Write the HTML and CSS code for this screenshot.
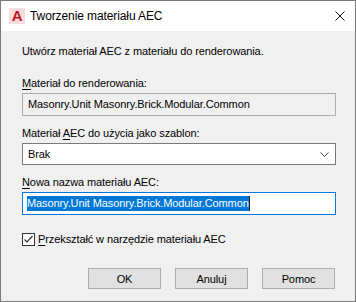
FILE: index.html
```html
<!DOCTYPE html>
<html lang="pl">
<head>
  <meta charset="UTF-8">
  <title>Tworzenie materiału AEC</title>
  <link rel="stylesheet" href="styles.css">
</head>
<body>

<div class="window">
  <!-- pasek tytułu -->
  <div class="titlebar">
    <span class="app-icon">A</span>
    <span class="title">Tworzenie materiału AEC</span>
    <svg class="close" width="10" height="10" viewBox="0 0 10 10">
      <path d="M0.5 0.5 L9.5 9.5 M9.5 0.5 L0.5 9.5" stroke="#111" stroke-width="1" fill="none"/>
    </svg>
  </div>

  <div class="content">
    <p class="intro">Utwórz materiał AEC z materiału do renderowania.</p>

    <div class="label label-first"><u>M</u>ateriał do renderowania:</div>
    <div class="field readonly">Masonry.Unit Masonry.Brick.Modular.Common</div>

    <div class="label"><span>Materiał <u>A</u>EC do użycia jako szablon:</span></div>
    <div class="field combo">
      <span>Brak</span>
      <svg class="chevron" width="9" height="5" viewBox="0 0 9 5">
        <path d="M0.5 0.5 L4.5 4.5 L8.5 0.5" stroke="#444" stroke-width="1" fill="none"/>
      </svg>
    </div>

    <div class="label"><u>N</u>owa nazwa materiału AEC:</div>
    <div class="field edit"><span class="sel">Masonry.Unit Masonry.Brick.Modular.Common</span><span class="caret"></span></div>

    <label class="check-row">
      <span class="checkbox">
        <svg width="11" height="11" viewBox="0 0 11 11">
          <path d="M1.5 5.5 L4 8 L9.5 2" stroke="#333" stroke-width="1.2" fill="none"/>
        </svg>
      </span>
      <span><u>P</u>rzekształć w narzędzie materiału AEC</span>
    </label>

    <div class="buttons">
      <button>OK</button>
      <button>Anuluj</button>
      <button>Pomoc</button>
    </div>
  </div>
</div>

</body>
</html>
```

FILE: styles.css
```css
body {
  margin: 0;
  font-family: "Liberation Sans", Arial, sans-serif;
  font-size: 11px;
  letter-spacing: -0.1px;
  color: #000;
}
.window {
  width: 356px;
  height: 302px;
  box-sizing: border-box;
  border: 1px solid #7a7a7a;
  background: #f0f0f0;
  display: flex;
  flex-direction: column;
}
.titlebar {
  height: 30px;
  background: #fff;
  display: flex;
  align-items: center;
}
.app-icon {
  width: 16px;
  height: 16px;
  margin-left: 8px;
  background: #f7dede;
  color: #c4141c;
  font-weight: bold;
  font-size: 15px;
  line-height: 16px;
  text-align: center;
}
.title {
  margin-left: 5px;
  font-size: 12px;
  flex: 1;
}
.close {
  margin-right: 10px;
}
.content {
  flex: 1;
  padding-left: 21px;
}
.intro {
  margin: 13px 0 0;
  line-height: 15px;
}
.label {
  line-height: 15px;
  margin-top: 10px;
  margin-bottom: 2px;
}
.label-first {
  margin-top: 17px;
}
u {
  text-decoration-thickness: 1px;
  text-underline-offset: 2px;
}
.field {
  width: 314px;
  box-sizing: border-box;
  height: 23px;
  line-height: 21px;
  padding-left: 4px;
  white-space: nowrap;
}
.readonly {
  border: 1px solid #adadad;
  background: #f0f0f0;
  padding-left: 5px;
}
.combo {
  height: 22px;
  line-height: 20px;
  border: 1px solid #7a7a7a;
  background: #fff;
  display: flex;
  align-items: center;
  justify-content: space-between;
  padding-left: 5px;
  padding-right: 6px;
}
.edit {
  border: 1px solid #0078d7;
  background: #fff;
  display: flex;
  align-items: center;
}
.sel {
  background: #0078d7;
  color: #fff;
  line-height: 15px;
}
.caret {
  display: inline-block;
  width: 1px;
  height: 15px;
  background: #222;
}
.check-row {
  display: flex;
  align-items: center;
  gap: 3px;
  margin-top: 17px;
  line-height: 15px;
}
.checkbox {
  width: 13px;
  height: 13px;
  box-sizing: border-box;
  border: 1px solid #333;
  background: #fff;
  display: flex;
  align-items: center;
  justify-content: center;
}
.buttons {
  display: flex;
  gap: 14px;
  margin-top: 21px;
  margin-left: 66px;
}
button {
  width: 73px;
  height: 21px;
  padding: 0;
  font-family: inherit;
  font-size: 11px;
  letter-spacing: -0.1px;
  background: #e1e1e1;
  border: 1px solid #adadad;
  color: #000;
}
```
